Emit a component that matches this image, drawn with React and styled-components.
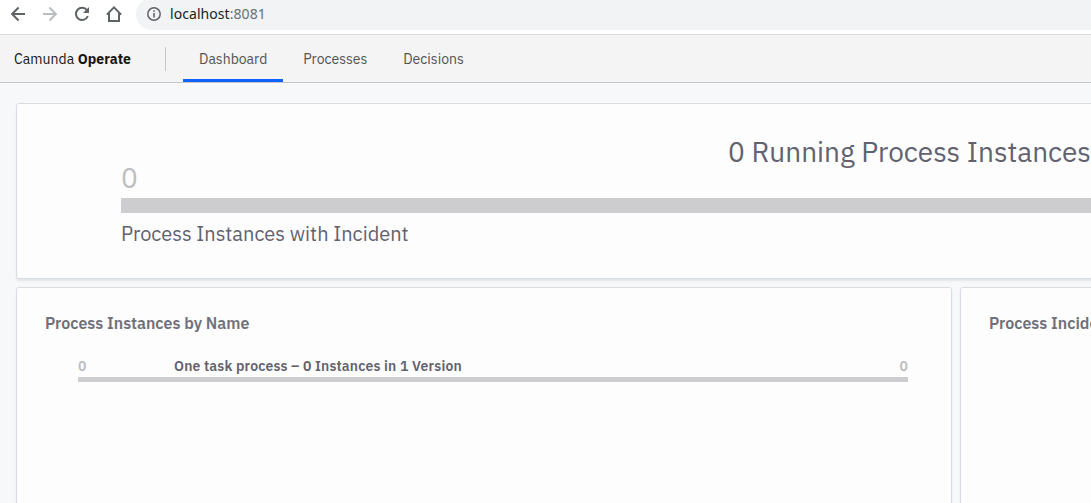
import React from "react";
import styled, { createGlobalStyle } from "styled-components";

const GlobalStyle = createGlobalStyle`
  * { box-sizing: border-box; }
  html, body { margin: 0; height: 100%; overflow: hidden; }
  body { font-family: "IBM Plex Sans", Roboto, "Noto Sans", sans-serif; }
`;

const Page = styled.div`
  display: flex;
  flex-direction: column;
  height: 503px;
  overflow: hidden;
  background: #f7f8fa;
`;

const BrowserBar = styled.div`
  display: flex;
  flex: none;
  height: 35px;
  background: #fff;
  border-bottom: 1px solid #dadce0;
`;

const BrowserButtons = styled.div`
  display: flex;
  gap: 16px;
  padding: 6px 14px 0 10px;
`;

const BrowserIcon = styled.svg`
  display: block;
  flex: none;
  width: 16px;
  height: 16px;
  fill: none;
  stroke: ${(p) => (p.$disabled ? "#babcbe" : "#5f6368")};
  stroke-width: 2;
`;

const AddressBar = styled.div`
  display: flex;
  align-items: center;
  flex: 1;
  height: 32px;
  margin-top: -2px;
  padding-left: 10px;
  border-radius: 16px 0 0 16px;
  background: #f1f3f4;
`;

const InfoIcon = styled.svg`
  width: 16px;
  height: 16px;
  margin-right: 8px;
  fill: #5f6368;
`;

const Address = styled.span`
  font: 14px/20px "Noto Sans", sans-serif;
  letter-spacing: 0.06px;
  color: #202124;
`;

const Port = styled.span`
  color: #6b6f73;
`;

const Header = styled.header`
  display: flex;
  flex: none;
  align-items: center;
  height: 48px;
  padding-left: 14px;
  background: #f4f4f4;
  border-bottom: 1px solid #c6c6c6;
`;

const Brand = styled.div`
  width: 151px;
  font-size: 14px;
  line-height: 20px;
  letter-spacing: 0.06px;
  white-space: nowrap;
  color: #161616;
`;

const Divider = styled.div`
  width: 1px;
  height: 24px;
  background: #c6c6c6;
`;

const Tabs = styled.nav`
  display: flex;
  align-self: stretch;
  margin-left: 17px;
`;

const Tab = styled.a`
  display: flex;
  align-items: center;
  padding: 3px 16px 0;
  margin-right: 4px;
  border-bottom: 3px solid ${(p) => (p.$active ? "#0f62fe" : "transparent")};
  font-size: 14px;
  letter-spacing: 0;
  white-space: nowrap;
  color: #525252;
`;

const Dashboard = styled.main`
  display: grid;
  flex: 1;
  grid-template-columns: 936px 936px;
  grid-template-rows: 176px 700px;
  gap: 8px;
  padding: 20px 16px;
`;

const Panel = styled.section`
  grid-column: ${(p) => (p.$wide ? "1 / -1" : "auto")};
  padding: ${(p) => (p.$wide ? "28px 104px 0" : "24px 28px 0")};
  border: 1px solid #d8dce3;
  border-radius: 3px;
  background: #fdfdfe;
  box-shadow: 0 2px 2px 0 rgba(0, 0, 0, 0.08);
`;

const Total = styled.h1`
  margin: 0;
  padding-left: 607px;
  font-size: 28px;
  font-weight: 400;
  line-height: 40px;
  color: #62626e;
`;

const IncidentCount = styled.div`
  height: 38px;
  margin-top: -12px;
  font-size: 28px;
  line-height: 36px;
  color: #bebec0;
`;

const Bar = styled.div`
  height: ${(p) => p.$height};
  background: #cdcdcf;
`;

const Caption = styled.div`
  margin-top: 7px;
  font-size: 20px;
  line-height: 28px;
  color: #62626e;
`;

const PanelTitle = styled.h2`
  margin: 0;
  font-size: 16px;
  font-weight: 600;
  line-height: 22px;
  white-space: nowrap;
  color: #6f7079;
`;

const ProcessRow = styled.div`
  width: 830px;
  margin: 22px 0 0 33px;
`;

const RowText = styled.div`
  display: flex;
  height: 21px;
  font-size: 14px;
  font-weight: 600;
  line-height: 20px;
`;

const RowCount = styled.span`
  width: ${(p) => p.$width || "auto"};
  color: #bebec0;
`;

const RowName = styled.span`
  flex: 1;
  letter-spacing: 0.16px;
  color: #62626e;
`;

export default function App() {
  return (
    <Page>
      <GlobalStyle />
      <BrowserBar>
        <BrowserButtons>
          <BrowserIcon viewBox="0 0 16 16">
            <path d="M15 8H2.500M8.600 1.500 2.100 8l6.500 6.500" />
          </BrowserIcon>
          <BrowserIcon viewBox="0 0 16 16" $disabled>
            <path d="M1 8h12.500M7.400 1.500 13.900 8l-6.500 6.500" />
          </BrowserIcon>
          <BrowserIcon viewBox="0 0 16 16">
            <path d="M13 4.300A6.100 6.100 0 1 0 13.800 10" />
            <path d="M15 1v6H9z" fill="#5f6368" stroke="none" />
          </BrowserIcon>
          <BrowserIcon viewBox="0 0 16 16">
            <path d="M.9 8.600 8 1.400l7.100 7.200M3 7v8h10V7" />
          </BrowserIcon>
        </BrowserButtons>
        <AddressBar>
          <InfoIcon viewBox="0 0 16 16">
            <circle cx="8" cy="8" r="6.200" fill="none" stroke="#5f6368" strokeWidth="1.500" />
            <path d="M7.200 4.200h1.600v1.600H7.200zM7.200 7h1.600v4.600H7.200z" />
          </InfoIcon>
          <Address>
            localhost<Port>:8081</Port>
          </Address>
        </AddressBar>
      </BrowserBar>
      <Header>
        <Brand>
          Camunda <b>Operate</b>
        </Brand>
        <Divider />
        <Tabs>
          <Tab $active>Dashboard</Tab>
          <Tab>Processes</Tab>
          <Tab>Decisions</Tab>
        </Tabs>
      </Header>
      <Dashboard>
        <Panel $wide>
          <Total>0 Running Process Instances</Total>
          <IncidentCount>0</IncidentCount>
          <Bar $height="15px" />
          <Caption>Process Instances with Incident</Caption>
        </Panel>
        <Panel>
          <PanelTitle>Process Instances by Name</PanelTitle>
          <ProcessRow>
            <RowText>
              <RowCount $width="96px">0</RowCount>
              <RowName>One task process – 0 Instances in 1 Version</RowName>
              <RowCount>0</RowCount>
            </RowText>
            <Bar $height="5px" />
          </ProcessRow>
        </Panel>
        <Panel>
          <PanelTitle>Process Incidents by Error Message</PanelTitle>
        </Panel>
      </Dashboard>
    </Page>
  );
}
